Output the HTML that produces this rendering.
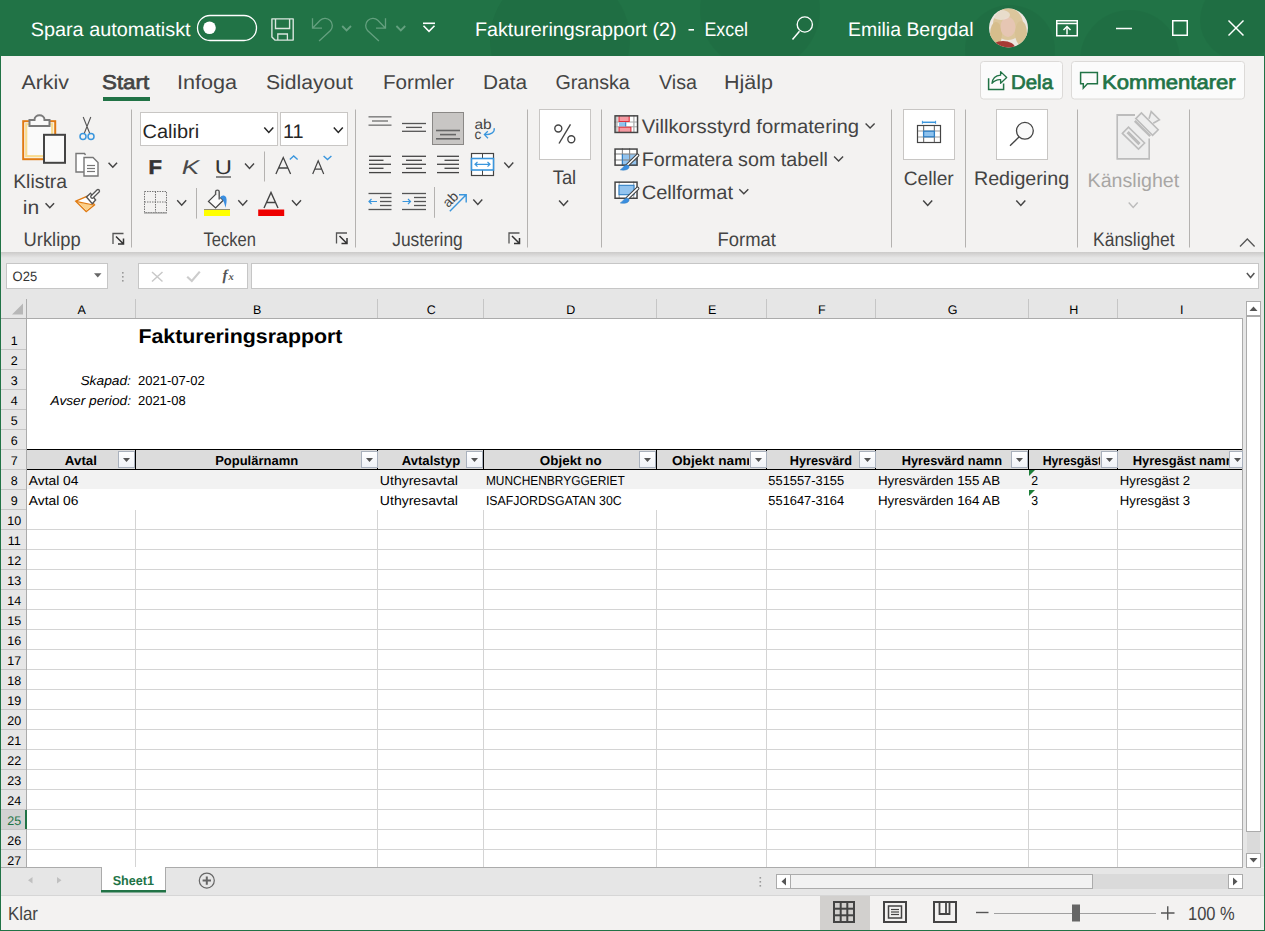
<!DOCTYPE html>
<html><head><meta charset="utf-8"><title>Excel</title>
<style>
html,body{margin:0;padding:0;width:1265px;height:931px;overflow:hidden;background:#f3f2f1;}
svg{display:block;font-family:'Liberation Sans', sans-serif;}
</style></head><body>
<svg width="1265" height="931" viewBox="0 0 1265 931" text-rendering="geometricPrecision">
<defs>
<radialGradient id="av" cx="50%" cy="45%" r="55%">
<stop offset="0" stop-color="#e9cdb8"/><stop offset="0.45" stop-color="#d8b98e"/><stop offset="0.8" stop-color="#c9a56e"/><stop offset="1" stop-color="#b08a5a"/>
</radialGradient>
<linearGradient id="shad" x1="0" y1="0" x2="0" y2="1"><stop offset="0" stop-color="#cbcac9"/><stop offset="1" stop-color="#e6e6e6"/></linearGradient>
<linearGradient id="fbtn" x1="0" y1="0" x2="0" y2="1"><stop offset="0" stop-color="#ffffff"/><stop offset="1" stop-color="#eef1f6"/></linearGradient>
<clipPath id="tb"><rect x="0" y="0" width="1265" height="56"/></clipPath>
<clipPath id="avc"><circle cx="1008.5" cy="28" r="19.5"/></clipPath>
<clipPath id="grid"><rect x="27" y="299" width="1216" height="568"/></clipPath>
</defs>
<rect x="0" y="0" width="1265" height="931" fill="#f3f2f1" />
<rect x="0" y="0" width="1265" height="56" fill="#217346" />
<g opacity="0.07" fill="#0b3d22" clip-path="url(#tb)"><circle cx="560" cy="40" r="70"/><circle cx="760" cy="10" r="60"/><circle cx="1010" cy="50" r="45"/><circle cx="1240" cy="20" r="40"/><circle cx="1130" cy="60" r="50"/></g>
<text x="30.72" y="36.00" font-size="19.5" fill="#ffffff" textLength="159.85" lengthAdjust="spacingAndGlyphs">Spara automatiskt</text>
<rect x="197.5" y="15.5" width="59" height="25" fill="none" stroke="#ffffff" stroke-width="1.3" rx="12.5" />
<circle cx="209.5" cy="27.8" r="6.3" fill="#fff"/>
<path d="M271.9,18.9 H293.2 V40.1 H274.9 L271.9,37.1 Z" stroke="#d9e6de" fill="none" stroke-width="1.4" stroke-linejoin="round"/>
<path d="M275.5,19 V28.5 H289.6 V19" stroke="#d9e6de" fill="none" stroke-width="1.4" />
<path d="M277.8,40 V34 H287.4 V40" stroke="#d9e6de" fill="none" stroke-width="1.3" />
<path d="M312.5,18.2 V28.2 H322 M312.5,28.2 L320.2,20.2 A7.3,7.3 0 0 1 330.5,30.5 L319.1,41" stroke="#64a07f" fill="none" stroke-width="1.3" />
<path d="M342.20000000000005,26.0 L346.6,30.4 L351.0,26.0" stroke="#64a07f" fill="none" stroke-width="1.8" />
<path d="M385.5,18.2 V28.2 H376 M385.5,28.2 L377.8,20.2 A7.3,7.3 0 0 0 367.5,30.5 L378.9,41" stroke="#64a07f" fill="none" stroke-width="1.3" />
<path d="M396.40000000000003,26.0 L400.8,30.4 L405.2,26.0" stroke="#64a07f" fill="none" stroke-width="1.8" />
<line x1="423" y1="23.3" x2="435" y2="23.3" stroke="#ffffff" stroke-width="1.6" />
<path d="M423.5,25.75 L429,31.25 L434.5,25.75" stroke="#ffffff" fill="none" stroke-width="1.6" />
<text x="475.02" y="35.80" font-size="19.5" fill="#ffffff" textLength="201.55" lengthAdjust="spacingAndGlyphs">Faktureringsrapport (2)</text>
<rect x="688.5" y="29" width="5.5" height="1.6" fill="#ffffff" />
<text x="704.52" y="35.80" font-size="19.5" fill="#ffffff" textLength="43.45" lengthAdjust="spacingAndGlyphs">Excel</text>
<circle cx="804.8" cy="24.5" r="7.6" fill="none" stroke="#fff" stroke-width="1.4"/>
<line x1="792.5" y1="39.5" x2="799.5" y2="31.3" stroke="#ffffff" stroke-width="1.5" />
<text x="848.02" y="36.00" font-size="19.5" fill="#ffffff" textLength="125.45" lengthAdjust="spacingAndGlyphs">Emilia Bergdal</text>
<g clip-path="url(#avc)"><rect x="988" y="8" width="42" height="42" fill="#ece6e0"/><ellipse cx="1008" cy="24" rx="15" ry="16" fill="#dcc69c"/><ellipse cx="996" cy="34" rx="6" ry="12" fill="#d6bd8c"/><ellipse cx="1021" cy="33" rx="6" ry="12" fill="#d8c194"/><ellipse cx="1008" cy="27" rx="7.5" ry="10" fill="#e6c6b3"/><ellipse cx="1003" cy="48" rx="12" ry="7" fill="#a63a35"/><ellipse cx="1001" cy="15" rx="9" ry="5" fill="#ece6df" opacity="0.7"/></g>
<rect x="1056.75" y="20.75" width="20.5" height="15" fill="none" stroke="#ffffff" stroke-width="1.5" />
<line x1="1057" y1="23.5" x2="1077" y2="23.5" stroke="#ffffff" stroke-width="1.5" />
<line x1="1067" y1="34.5" x2="1067" y2="27" stroke="#ffffff" stroke-width="1.5" />
<path d="M1063.5,30 L1067,26.5 L1070.5,30" stroke="#ffffff" fill="none" stroke-width="1.5" />
<line x1="1116" y1="28.5" x2="1132" y2="28.5" stroke="#ffffff" stroke-width="1.5" />
<rect x="1172.75" y="20.75" width="14.5" height="14.5" fill="none" stroke="#ffffff" stroke-width="1.5" />
<line x1="1228.5" y1="20.5" x2="1243.5" y2="35.5" stroke="#ffffff" stroke-width="1.5" />
<line x1="1243.5" y1="20.5" x2="1228.5" y2="35.5" stroke="#ffffff" stroke-width="1.5" />
<text x="21.50" y="89.00" font-size="20" fill="#444444" textLength="47.50" lengthAdjust="spacingAndGlyphs">Arkiv</text>
<text x="176.90" y="89.00" font-size="20" fill="#444444" textLength="60.10" lengthAdjust="spacingAndGlyphs">Infoga</text>
<text x="266.00" y="89.00" font-size="20" fill="#444444" textLength="87.00" lengthAdjust="spacingAndGlyphs">Sidlayout</text>
<text x="383.00" y="89.00" font-size="20" fill="#444444" textLength="71.00" lengthAdjust="spacingAndGlyphs">Formler</text>
<text x="483.00" y="89.00" font-size="20" fill="#444444" textLength="44.00" lengthAdjust="spacingAndGlyphs">Data</text>
<text x="555.40" y="89.00" font-size="20" fill="#444444" textLength="74.40" lengthAdjust="spacingAndGlyphs">Granska</text>
<text x="659.00" y="89.00" font-size="20" fill="#444444" textLength="38.00" lengthAdjust="spacingAndGlyphs">Visa</text>
<text x="724.00" y="89.00" font-size="20" fill="#444444" textLength="49.00" lengthAdjust="spacingAndGlyphs">Hjälp</text>
<text x="102.00" y="89.00" font-size="20" fill="#444444" stroke="#444444" stroke-width="0.7" textLength="47.20" lengthAdjust="spacingAndGlyphs">Start</text>
<rect x="103" y="97" width="47" height="4" fill="#217346" />
<rect x="980.5" y="61.5" width="82" height="37.5" fill="#fbfbfb" stroke="#dcdad8" stroke-width="1" rx="3" />
<rect x="1071.5" y="61.5" width="173" height="37.5" fill="#fbfbfb" stroke="#dcdad8" stroke-width="1" rx="3" />
<path d="M988.6,78.3 V89.4 H1003.6 V83.6" stroke="#217346" fill="none" stroke-width="1.5" />
<path d="M992,83.4 C992.5,78 996,75.6 1000.6,75.2 V71.6 L1006.7,77.5 L1000.6,83.2 V79.6 C997,79.4 994,81 992,83.4 Z" stroke="#217346" fill="none" stroke-width="1.3" stroke-linejoin="round"/>
<text x="1011.00" y="88.80" font-size="20" fill="#217346" stroke="#217346" stroke-width="0.7" textLength="42.00" lengthAdjust="spacingAndGlyphs">Dela</text>
<path d="M1080.6,72.6 H1097.4 V83.8 H1087.4 L1083.3,88.2 V83.8 H1080.6 Z" stroke="#217346" fill="none" stroke-width="1.5" />
<text x="1102.00" y="88.80" font-size="20" fill="#217346" stroke="#217346" stroke-width="0.7" textLength="133.70" lengthAdjust="spacingAndGlyphs">Kommentarer</text>
<line x1="131.5" y1="109.5" x2="131.5" y2="247.5" stroke="#b4b2b0" stroke-width="1" />
<line x1="355.5" y1="109.5" x2="355.5" y2="247.5" stroke="#b4b2b0" stroke-width="1" />
<line x1="527.5" y1="109.5" x2="527.5" y2="247.5" stroke="#b4b2b0" stroke-width="1" />
<line x1="601.5" y1="109.5" x2="601.5" y2="247.5" stroke="#b4b2b0" stroke-width="1" />
<line x1="891.5" y1="109.5" x2="891.5" y2="247.5" stroke="#b4b2b0" stroke-width="1" />
<line x1="965.5" y1="109.5" x2="965.5" y2="247.5" stroke="#b4b2b0" stroke-width="1" />
<line x1="1077.5" y1="109.5" x2="1077.5" y2="247.5" stroke="#b4b2b0" stroke-width="1" />
<line x1="1189.5" y1="109.5" x2="1189.5" y2="247.5" stroke="#b4b2b0" stroke-width="1" />
<rect x="0" y="252" width="1265" height="47" fill="#e6e6e6" />
<rect x="0" y="252" width="1265" height="6" fill="url(#shad)" />
<rect x="23.2" y="121.2" width="32" height="38" fill="#fafafa" stroke="#e07a12" stroke-width="2" />
<rect x="26.2" y="124.2" width="26" height="32" fill="none" stroke="#f9db8e" stroke-width="2.2" />
<path d="M29.5,126 V120 H34.5 C34.5,113.8 44.5,113.8 44.5,120 H49.5 V126 Z" stroke="#7a7a7a" fill="#fafafa" stroke-width="2" />
<rect x="44" y="134.8" width="21" height="28" fill="#fafafa" stroke="#444" stroke-width="2" />
<text x="13.22" y="187.50" font-size="19.5" fill="#444444" textLength="53.75" lengthAdjust="spacingAndGlyphs">Klistra</text>
<text x="22.82" y="213.70" font-size="19.5" fill="#444444" textLength="16.45" lengthAdjust="spacingAndGlyphs">in</text>
<path d="M45.55,203.25 L49.8,207.75 L54.05,203.25" stroke="#444444" fill="none" stroke-width="1.5" />
<path d="M83.2,117 L89.8,133.5 M90.8,117 L84.2,133.5" stroke="#555" fill="none" stroke-width="1.1" />
<circle cx="83" cy="136.5" r="3" fill="none" stroke="#3a96dd" stroke-width="1.5"/>
<circle cx="91" cy="136.5" r="3" fill="none" stroke="#3a96dd" stroke-width="1.5"/>
<path d="M84,172 H76 V153.5 H84.5 L85.5,155" stroke="#777" fill="#fff" stroke-width="1.4" />
<path d="M84,157.5 H93 L98,162.5 V176 H84 Z" stroke="#777" fill="#fff" stroke-width="1.4" />
<line x1="87" y1="165.5" x2="95" y2="165.5" stroke="#777" stroke-width="1.2" />
<line x1="87" y1="168.5" x2="95" y2="168.5" stroke="#777" stroke-width="1.2" />
<line x1="87" y1="171.5" x2="95" y2="171.5" stroke="#777" stroke-width="1.2" />
<path d="M108.55,162.75 L112.8,167.25 L117.05,162.75" stroke="#444444" fill="none" stroke-width="1.5" />
<path d="M75.8,201.2 L87.5,196.2 L94.5,204.8 L86.2,211.6 Z" stroke="#e07b12" fill="#ffffff" stroke-width="1.4" />
<path d="M77.5,202 L92.8,205.2 L86.4,210.4 Z" stroke="none" fill="#fbd08a" stroke-width="1" />
<path d="M77,201.6 L93.5,205" stroke="#e07b12" fill="none" stroke-width="1.2" />
<path d="M86.5,197 L90.5,193.2 L95.6,200 L92.3,203.6 Z" stroke="#555" fill="#ffffff" stroke-width="1.4" />
<path d="M92.2,196.8 L98,191" stroke="#555" fill="none" stroke-width="4.2" stroke-linecap="round"/>
<path d="M92.2,196.8 L98,191" stroke="#ffffff" fill="none" stroke-width="1.6" stroke-linecap="round"/>
<text x="23.52" y="245.60" font-size="19.5" fill="#444444" textLength="57.15" lengthAdjust="spacingAndGlyphs">Urklipp</text>
<path d="M113.0,244 V233.5 H123.5" stroke="#555" fill="none" stroke-width="1.3" />
<path d="M116.0,236.5 L123.5,244 M123.5,238.5 V244 H118.0" stroke="#333" fill="none" stroke-width="1.5" />
<rect x="140.5" y="112.5" width="137" height="33" fill="#ffffff" stroke="#c8c6c4" stroke-width="1" />
<rect x="280.5" y="112.5" width="67" height="33" fill="#ffffff" stroke="#c8c6c4" stroke-width="1" />
<text x="142.62" y="138.30" font-size="19.5" fill="#262626" textLength="56.55" lengthAdjust="spacingAndGlyphs">Calibri</text>
<path d="M264.3,127.5 L268.8,132.5 L273.3,127.5" stroke="#262626" fill="none" stroke-width="1.5" />
<text x="283.02" y="138.30" font-size="19.5" fill="#262626" textLength="20.65" lengthAdjust="spacingAndGlyphs">11</text>
<path d="M333.8,127.5 L338.3,132.5 L342.8,127.5" stroke="#262626" fill="none" stroke-width="1.5" />
<text x="148.60" y="174.00" font-size="20" fill="#333" font-weight="bold" stroke="#333" stroke-width="0.6" textLength="13.40" lengthAdjust="spacingAndGlyphs">F</text>
<text x="181.70" y="174.00" font-size="20" fill="#4a4a4a" font-style="italic" textLength="17.50" lengthAdjust="spacingAndGlyphs">K</text>
<text x="214.80" y="174.00" font-size="20" fill="#333" textLength="17.20" lengthAdjust="spacingAndGlyphs">U</text>
<line x1="216" y1="177" x2="231" y2="177" stroke="#888" stroke-width="2" />
<path d="M245.0,163.5 L249.5,168.5 L254.0,163.5" stroke="#444444" fill="none" stroke-width="1.4" />
<line x1="264.5" y1="151.5" x2="264.5" y2="181.5" stroke="#b4b2b0" stroke-width="1" />
<path d="M275.9,174 L283.25,157.6 L290.6,174 M278.6,168 H287.9" stroke="#444" fill="none" stroke-width="1.3" />
<path d="M289.8,159.5 L293.7,156 L297.6,159.5" stroke="#3a96dd" fill="none" stroke-width="1.4" />
<path d="M312.7,174 L318.2,160.8 L323.7,174 M314.7,169.2 H321.7" stroke="#444" fill="none" stroke-width="1.2" />
<path d="M323.6,156 L327.5,159.5 L331.4,156" stroke="#3a96dd" fill="none" stroke-width="1.4" />
<g stroke="#777" stroke-width="1" stroke-dasharray="1.5,1" fill="none"><rect x="144.5" y="191.5" width="22" height="21"/><line x1="155.5" y1="191.5" x2="155.5" y2="212.5"/><line x1="144.5" y1="202" x2="166.5" y2="202"/></g>
<line x1="144" y1="213" x2="167" y2="213" stroke="#999" stroke-width="1.2" />
<path d="M177.2,200.3 L181.7,205.3 L186.2,200.3" stroke="#444444" fill="none" stroke-width="1.4" />
<line x1="196.5" y1="188" x2="196.5" y2="218.6" stroke="#b4b2b0" stroke-width="1" />
<path d="M215.6,194.4 L208.5,201.4 L215.6,207.9 L223.3,200.2 L219.5,196.5 Z" stroke="none" fill="#fafafa" stroke-width="1" />
<path d="M215.6,194.4 L208.5,201.4 L215.6,207.9 L223.3,200.2 L220.3,197.4" stroke="#444" fill="none" stroke-width="1.3" />
<path d="M215.6,195 V191.8 C215.6,189.6 219.2,189.6 219.2,191.8 V199.5" stroke="#555" fill="none" stroke-width="1.4" />
<path d="M220.4,197.4 C221.2,195.2 224.6,194.6 226.2,197.6 C227.2,200.4 226.2,204.5 225.6,207.8 C224.6,204.2 223.8,200.8 222.2,199.2 Z" stroke="none" fill="#3a8ee0" stroke-width="1" />
<rect x="204" y="209" width="26" height="7" fill="#ffff00" />
<line x1="204" y1="209.5" x2="230" y2="209.5" stroke="#77708a" stroke-width="0.8" />
<path d="M238.3,200.3 L242.8,205.3 L247.3,200.3" stroke="#444444" fill="none" stroke-width="1.4" />
<path d="M264,208 L271,192.5 L278,208 M266.5,202.5 H275.5" stroke="#444" fill="none" stroke-width="1.4" />
<rect x="258.2" y="209.5" width="26" height="6.5" fill="#ee0000" />
<path d="M292.0,200.3 L296.5,205.3 L301.0,200.3" stroke="#444444" fill="none" stroke-width="1.4" />
<text x="203.53" y="246.00" font-size="19.5" fill="#444444" textLength="52.45" lengthAdjust="spacingAndGlyphs">Tecken</text>
<path d="M336.5,243.5 V233.0 H347" stroke="#555" fill="none" stroke-width="1.3" />
<path d="M339.5,236.0 L347,243.5 M347,238.0 V243.5 H341.5" stroke="#333" fill="none" stroke-width="1.5" />
<line x1="368.5" y1="116.8" x2="391.5" y2="116.8" stroke="#888" stroke-width="1.6" />
<line x1="372" y1="121" x2="388" y2="121" stroke="#888" stroke-width="1.6" />
<line x1="368.5" y1="125.2" x2="391.5" y2="125.2" stroke="#888" stroke-width="1.6" />
<line x1="402" y1="123.5" x2="426" y2="123.5" stroke="#555" stroke-width="1.3" />
<line x1="406" y1="127.4" x2="422" y2="127.4" stroke="#555" stroke-width="1.3" />
<line x1="402" y1="131.3" x2="426" y2="131.3" stroke="#555" stroke-width="1.3" />
<rect x="432.5" y="112.5" width="31" height="32" fill="#c8c6c4" stroke="#8a8886" stroke-width="1" />
<line x1="436" y1="130.5" x2="460" y2="130.5" stroke="#666" stroke-width="1.6" />
<line x1="440" y1="134.6" x2="456" y2="134.6" stroke="#666" stroke-width="1.6" />
<line x1="436" y1="138.8" x2="460" y2="138.8" stroke="#666" stroke-width="1.6" />
<text x="474.50" y="128.60" font-size="14" fill="#444" textLength="17.20" lengthAdjust="spacingAndGlyphs">ab</text>
<text x="474.50" y="139.00" font-size="14" fill="#444" textLength="6.80" lengthAdjust="spacingAndGlyphs">c</text>
<path d="M494.2,128.2 C495,132.5 490.5,135 484.6,134.6 M487.8,131.3 L484.4,134.6 L488,138.2" stroke="#3a96dd" fill="none" stroke-width="1.3" />
<line x1="369" y1="156.3" x2="391" y2="156.3" stroke="#444" stroke-width="1.3" />
<line x1="369" y1="160.3" x2="383.5" y2="160.3" stroke="#444" stroke-width="1.3" />
<line x1="369" y1="164.3" x2="391" y2="164.3" stroke="#444" stroke-width="1.3" />
<line x1="369" y1="168.3" x2="383.5" y2="168.3" stroke="#444" stroke-width="1.3" />
<line x1="369" y1="172.6" x2="391" y2="172.6" stroke="#444" stroke-width="1.3" />
<line x1="402" y1="156.3" x2="426" y2="156.3" stroke="#444" stroke-width="1.3" />
<line x1="406" y1="160.3" x2="422" y2="160.3" stroke="#444" stroke-width="1.3" />
<line x1="402" y1="164.3" x2="426" y2="164.3" stroke="#444" stroke-width="1.3" />
<line x1="406" y1="168.3" x2="422" y2="168.3" stroke="#444" stroke-width="1.3" />
<line x1="402" y1="172.6" x2="426" y2="172.6" stroke="#444" stroke-width="1.3" />
<line x1="437" y1="156.3" x2="459" y2="156.3" stroke="#444" stroke-width="1.3" />
<line x1="444.5" y1="160.3" x2="459" y2="160.3" stroke="#444" stroke-width="1.3" />
<line x1="437" y1="164.3" x2="459" y2="164.3" stroke="#444" stroke-width="1.3" />
<line x1="444.5" y1="168.3" x2="459" y2="168.3" stroke="#444" stroke-width="1.3" />
<line x1="437" y1="172.6" x2="459" y2="172.6" stroke="#444" stroke-width="1.3" />
<rect x="471.5" y="153.5" width="22" height="22" fill="#fff" stroke="#444" stroke-width="1.2" />
<line x1="482.5" y1="153.5" x2="482.5" y2="175.5" stroke="#444" stroke-width="1" />
<rect x="471.5" y="158.5" width="22" height="11.5" fill="#fff" stroke="#3a96dd" stroke-width="1.6" />
<path d="M475,164.3 H490 M477.5,162 L475,164.3 L477.5,166.6 M487.5,162 L490,164.3 L487.5,166.6" stroke="#3a96dd" fill="none" stroke-width="1.2" />
<path d="M504.3,162.5 L508.8,167.5 L513.3,162.5" stroke="#444444" fill="none" stroke-width="1.4" />
<line x1="368.5" y1="193.5" x2="391.5" y2="193.5" stroke="#555" stroke-width="1.3" />
<line x1="380" y1="197.5" x2="391.5" y2="197.5" stroke="#555" stroke-width="1.3" />
<line x1="380" y1="201.5" x2="391.5" y2="201.5" stroke="#555" stroke-width="1.3" />
<line x1="380" y1="205.5" x2="391.5" y2="205.5" stroke="#555" stroke-width="1.3" />
<line x1="368.5" y1="209.5" x2="391.5" y2="209.5" stroke="#555" stroke-width="1.3" />
<path d="M369,201.5 H377 M371.5,199 L369,201.5 L371.5,204" stroke="#3a96dd" fill="none" stroke-width="1.2" />
<line x1="402" y1="193.5" x2="426" y2="193.5" stroke="#555" stroke-width="1.3" />
<line x1="414" y1="197.5" x2="426" y2="197.5" stroke="#555" stroke-width="1.3" />
<line x1="414" y1="201.5" x2="426" y2="201.5" stroke="#555" stroke-width="1.3" />
<line x1="414" y1="205.5" x2="426" y2="205.5" stroke="#555" stroke-width="1.3" />
<line x1="402" y1="209.5" x2="426" y2="209.5" stroke="#555" stroke-width="1.3" />
<path d="M402.5,201.5 H410.5 M408,199 L410.5,201.5 L408,204" stroke="#3a96dd" fill="none" stroke-width="1.2" />
<line x1="434.5" y1="187" x2="434.5" y2="217.8" stroke="#b4b2b0" stroke-width="1" />
<text x="450.6" y="204.2" font-size="14" fill="#444" text-anchor="middle" transform="rotate(-45 450.6 199.6)">ab</text>
<path d="M449.8,211.3 L466.2,194.8 M459,194.8 H466.2 V202.4" stroke="#3a96dd" fill="none" stroke-width="1.4" />
<path d="M473.3,199.5 L477.8,204.5 L482.3,199.5" stroke="#444444" fill="none" stroke-width="1.4" />
<text x="392.22" y="246.00" font-size="19.5" fill="#444444" textLength="70.55" lengthAdjust="spacingAndGlyphs">Justering</text>
<path d="M509.0,243.5 V233.0 H519.5" stroke="#555" fill="none" stroke-width="1.3" />
<path d="M512.0,236.0 L519.5,243.5 M519.5,238.0 V243.5 H514.0" stroke="#333" fill="none" stroke-width="1.5" />
<rect x="539.5" y="109.5" width="51" height="50" fill="#ffffff" stroke="#c8c6c4" stroke-width="1" />
<circle cx="558.3" cy="128.5" r="3.5" fill="none" stroke="#444" stroke-width="1.4"/>
<circle cx="571.3" cy="139.3" r="3.5" fill="none" stroke="#444" stroke-width="1.4"/>
<line x1="559" y1="143.5" x2="570.5" y2="124.3" stroke="#444" stroke-width="1.4" />
<text x="552.73" y="184.40" font-size="19.5" fill="#444444" textLength="23.45" lengthAdjust="spacingAndGlyphs">Tal</text>
<path d="M559.1,200.5 L563.6,205.5 L568.1,200.5" stroke="#444444" fill="none" stroke-width="1.5" />
<rect x="614.3" y="115.1" width="23.5" height="17.6" fill="#fff" />
<line x1="616.9" y1="115.1" x2="616.9" y2="132.7" stroke="#a8a8a8" stroke-width="1.2" />
<line x1="633.9" y1="115.1" x2="633.9" y2="132.7" stroke="#a8a8a8" stroke-width="1.2" />
<line x1="614.3" y1="122.0" x2="637.8" y2="122.0" stroke="#a8a8a8" stroke-width="1" />
<line x1="614.3" y1="126.8" x2="637.8" y2="126.8" stroke="#a8a8a8" stroke-width="1" />
<rect x="619.0" y="115.69999999999999" width="10.2" height="5.8" fill="#f59aa2" />
<path d="M619.0,115.69999999999999 V121.5 H629.1999999999999 V115.69999999999999" stroke="#e0303c" fill="none" stroke-width="1.1" />
<rect x="619.0" y="122.3" width="6.7" height="4.2" fill="#8ec2ee" />
<path d="M625.6999999999999,122.3 V126.5" stroke="#2f7fc4" fill="none" stroke-width="1.1" />
<rect x="619.0" y="127.3" width="11.9" height="5.2" fill="#f59aa2" />
<path d="M619.0,132.29999999999998 V127.3 H630.9 V132.29999999999998" stroke="#e0303c" fill="none" stroke-width="1.1" />
<rect x="615.05" y="115.85" width="22.5" height="16.6" fill="none" stroke="#444" stroke-width="1.5" />
<text x="641.73" y="132.60" font-size="19.5" fill="#444444" textLength="217.25" lengthAdjust="spacingAndGlyphs">Villkorsstyrd formatering</text>
<path d="M865.6,123.45 L870.1,127.95 L874.6,123.45" stroke="#444444" fill="none" stroke-width="1.4" />
<rect x="614.3" y="148.3" width="23.5" height="17.6" fill="#fff" />
<rect x="622.4" y="154.0" width="15.4" height="11.9" fill="#93c4ef" />
<line x1="622.4" y1="148.3" x2="622.4" y2="165.9" stroke="#888" stroke-width="1.1" />
<line x1="629.5999999999999" y1="148.3" x2="629.5999999999999" y2="165.9" stroke="#888" stroke-width="1.1" />
<line x1="614.3" y1="154.0" x2="637.8" y2="154.0" stroke="#888" stroke-width="1.1" />
<line x1="614.3" y1="160.0" x2="637.8" y2="160.0" stroke="#888" stroke-width="1.1" />
<line x1="622.4" y1="154.0" x2="622.4" y2="165.9" stroke="#2f7fc4" stroke-width="1.1" />
<rect x="615.05" y="149.05" width="22" height="16.1" fill="none" stroke="#444" stroke-width="1.5" />
<path d="M637.5999999999999,155.3 L627.3,165.3" stroke="#444" fill="none" stroke-width="3.6" stroke-linecap="round"/>
<path d="M637.5999999999999,155.3 L627.3,165.3" stroke="#fff" fill="none" stroke-width="1.5" stroke-linecap="round"/>
<path d="M620.3,169.8 C622.3,169.3 623.3,165.8 626.3,165.10000000000002 C628.8,164.8 629.8,167.10000000000002 628.3,168.60000000000002 C626.8,170.10000000000002 623.3,170.5 620.3,169.8 Z" stroke="#2f7fc4" fill="#3a8ee0" stroke-width="0.6" />
<text x="641.73" y="165.70" font-size="19.5" fill="#444444" textLength="186.25" lengthAdjust="spacingAndGlyphs">Formatera som tabell</text>
<path d="M834.1,156.55 L838.6,161.05 L843.1,156.55" stroke="#444444" fill="none" stroke-width="1.4" />
<rect x="614.3" y="181.4" width="23.5" height="17.6" fill="#fff" />
<line x1="619.1999999999999" y1="181.4" x2="619.1999999999999" y2="199.0" stroke="#a8a8a8" stroke-width="1.1" />
<line x1="633.6999999999999" y1="181.4" x2="633.6999999999999" y2="199.0" stroke="#a8a8a8" stroke-width="1.1" />
<rect x="619.0" y="185.3" width="15" height="9.4" fill="#93c4ef" stroke="#2f7fc4" stroke-width="1.1" />
<rect x="615.05" y="182.15" width="22" height="16.1" fill="none" stroke="#444" stroke-width="1.5" />
<path d="M637.5999999999999,188.4 L627.3,198.4" stroke="#444" fill="none" stroke-width="3.6" stroke-linecap="round"/>
<path d="M637.5999999999999,188.4 L627.3,198.4" stroke="#fff" fill="none" stroke-width="1.5" stroke-linecap="round"/>
<path d="M620.3,202.9 C622.3,202.4 623.3,198.9 626.3,198.20000000000002 C628.8,197.9 629.8,200.20000000000002 628.3,201.70000000000002 C626.8,203.20000000000002 623.3,203.6 620.3,202.9 Z" stroke="#2f7fc4" fill="#3a8ee0" stroke-width="0.6" />
<text x="641.73" y="198.60" font-size="19.5" fill="#444444" textLength="91.25" lengthAdjust="spacingAndGlyphs">Cellformat</text>
<path d="M739.3,189.25 L743.8,193.75 L748.3,189.25" stroke="#444444" fill="none" stroke-width="1.4" />
<text x="717.62" y="245.90" font-size="19.5" fill="#444444" textLength="58.35" lengthAdjust="spacingAndGlyphs">Format</text>
<rect x="903.5" y="109.5" width="51" height="50" fill="#ffffff" stroke="#c8c6c4" stroke-width="1" />
<rect x="917.5" y="125.5" width="23" height="17" fill="#fff" stroke="#444" stroke-width="1.2" />
<line x1="923.6" y1="126" x2="923.6" y2="142" stroke="#777" stroke-width="1.2" />
<line x1="934.4" y1="126" x2="934.4" y2="142" stroke="#777" stroke-width="1.2" />
<line x1="918" y1="131" x2="940" y2="131" stroke="#999" stroke-width="1" />
<line x1="918" y1="137" x2="940" y2="137" stroke="#999" stroke-width="1" />
<rect x="923.6" y="131.2" width="10.8" height="5.6" fill="#8ec2ee" stroke="#2f7fc4" stroke-width="1.3" />
<line x1="922.3" y1="122.3" x2="935.7" y2="122.3" stroke="#3a96dd" stroke-width="1.5" />
<line x1="922.4" y1="120.8" x2="922.4" y2="123.8" stroke="#3a96dd" stroke-width="1" />
<line x1="935.6" y1="120.8" x2="935.6" y2="123.8" stroke="#3a96dd" stroke-width="1" />
<text x="903.73" y="184.80" font-size="19.5" fill="#444444" textLength="49.95" lengthAdjust="spacingAndGlyphs">Celler</text>
<path d="M923.2,200.5 L927.7,205.5 L932.2,200.5" stroke="#444444" fill="none" stroke-width="1.5" />
<rect x="996.5" y="109.5" width="51" height="50" fill="#ffffff" stroke="#c8c6c4" stroke-width="1" />
<circle cx="1024.9" cy="130.8" r="8.4" fill="#fafafa" stroke="#444" stroke-width="1.3"/>
<line x1="1010" y1="145.8" x2="1019" y2="137" stroke="#444" stroke-width="1.3" />
<text x="973.92" y="184.80" font-size="19.5" fill="#444444" textLength="95.25" lengthAdjust="spacingAndGlyphs">Redigering</text>
<path d="M1016.3,200.5 L1020.8,205.5 L1025.3,200.5" stroke="#444444" fill="none" stroke-width="1.5" />
<path d="M1135,115 H1117.3 V158.8 H1149.1 V138.5" stroke="#bcbcbc" fill="none" stroke-width="1.8" />
<path d="M1118.2,116 H1134 L1148.2,138.5 V157.9 H1118.2 Z" stroke="none" fill="#eeeeee" stroke-width="1" />
<path d="M1122.4,133.4 L1128.5,127.2 L1144.6,143 L1138.5,149.1 Z" stroke="#bcbcbc" fill="#eeeeee" stroke-width="1.6" />
<path d="M1127.5,133.3 L1128.7,132.1 L1139.6,143 L1138.4,144.2 Z" stroke="#bcbcbc" fill="#bcbcbc" stroke-width="1.4" />
<path d="M1135.8,118.6 L1141.4,113 L1158.2,129.8 L1152.6,135.4 Z" stroke="#bcbcbc" fill="#eeeeee" stroke-width="1.6" />
<path d="M1134.8,120.8 L1150.2,136.2" stroke="#bcbcbc" fill="none" stroke-width="2.4" />
<path d="M1149,118.8 L1151.2,111.6 L1159.4,119.8 L1153.2,123.2" stroke="#bcbcbc" fill="#eeeeee" stroke-width="1.6" />
<text x="1087.62" y="187.00" font-size="19.5" fill="#a8a6a4" textLength="91.55" lengthAdjust="spacingAndGlyphs">Känslighet</text>
<path d="M1128.7,202.5 L1133.2,207.5 L1137.7,202.5" stroke="#bbb" fill="none" stroke-width="1.4" />
<text x="1093.03" y="245.90" font-size="19.5" fill="#444444" textLength="81.65" lengthAdjust="spacingAndGlyphs">Känslighet</text>
<path d="M1240,246.5 L1247.3,239 L1254.6,246.5" stroke="#555" fill="none" stroke-width="1.3" />
<rect x="6.5" y="263.5" width="101" height="25" fill="#ffffff" stroke="#c6c6c6" stroke-width="1" />
<text x="12.62" y="281.00" font-size="13.5" fill="#333" textLength="24.55" lengthAdjust="spacingAndGlyphs">O25</text>
<path d="M94,273.3 H101.5 L97.75,277.5 Z" stroke="none" fill="#666" stroke-width="1" />
<rect x="122" y="272" width="1.6" height="1.6" fill="#999" />
<rect x="122" y="276" width="1.6" height="1.6" fill="#999" />
<rect x="122" y="280" width="1.6" height="1.6" fill="#999" />
<rect x="138.5" y="263.5" width="109" height="25" fill="#ffffff" stroke="#c6c6c6" stroke-width="1" />
<path d="M152,272 L162.5,281.5 M162.5,272 L152,281.5" stroke="#c8c8c8" fill="none" stroke-width="1.5" />
<path d="M187.2,276.8 L191.8,281 L199.8,271.6" stroke="#cccccc" fill="none" stroke-width="2.2" />
<text x="222.6" y="279.6" font-size="15" font-weight="bold" font-style="italic" font-family="Liberation Serif" fill="#555">f</text>
<text x="228.4" y="279.6" font-size="10.5" font-weight="bold" font-style="italic" font-family="Liberation Serif" fill="#555">x</text>
<rect x="251.5" y="263.5" width="1007" height="25" fill="#ffffff" stroke="#c6c6c6" stroke-width="1" />
<path d="M1246.85,273.05 L1250.6,277.55 L1254.35,273.05" stroke="#555" fill="none" stroke-width="1.5" />
<rect x="1" y="299" width="1242" height="20" fill="#e6e6e6" />
<rect x="1" y="299" width="26" height="568" fill="#e6e6e6" />
<rect x="27" y="319" width="1216" height="548" fill="#ffffff" />
<path d="M27,529.5 H1242 M27,549.5 H1242 M27,569.5 H1242 M27,589.5 H1242 M27,609.5 H1242 M27,629.5 H1242 M27,649.5 H1242 M27,669.5 H1242 M27,689.5 H1242 M27,709.5 H1242 M27,729.5 H1242 M27,749.5 H1242 M27,769.5 H1242 M27,789.5 H1242 M27,809.5 H1242 M27,829.5 H1242 M27,849.5 H1242 M27,869.5 H1242 M135.5,510 V867 M377.5,510 V867 M483.5,510 V867 M656.5,510 V867 M766.5,510 V867 M875.5,510 V867 M1028.5,510 V867 M1117.5,510 V867" stroke="#d4d4d4" fill="none" stroke-width="1" />
<path d="M1,349.5 H26 M1,369.5 H26 M1,389.5 H26 M1,409.5 H26 M1,429.5 H26 M1,449.5 H26 M1,469.5 H26 M1,489.5 H26 M1,509.5 H26 M1,529.5 H26 M1,549.5 H26 M1,569.5 H26 M1,589.5 H26 M1,609.5 H26 M1,629.5 H26 M1,649.5 H26 M1,669.5 H26 M1,689.5 H26 M1,709.5 H26 M1,729.5 H26 M1,749.5 H26 M1,769.5 H26 M1,789.5 H26 M1,809.5 H26 M1,829.5 H26 M1,849.5 H26 M1,869.5 H26" stroke="#c6c6c6" fill="none" stroke-width="1" />
<path d="M135.5,299 V318 M377.5,299 V318 M483.5,299 V318 M656.5,299 V318 M766.5,299 V318 M875.5,299 V318 M1028.5,299 V318 M1117.5,299 V318" stroke="#c6c6c6" fill="none" stroke-width="1" />
<line x1="1" y1="318.5" x2="1243" y2="318.5" stroke="#ababab" stroke-width="1" />
<line x1="26.5" y1="299" x2="26.5" y2="867" stroke="#ababab" stroke-width="1" />
<line x1="1242.5" y1="318" x2="1242.5" y2="867" stroke="#ababab" stroke-width="1" />
<path d="M12,314.5 L23,314.5 L23,303.5 Z" stroke="none" fill="#b7b7b7" stroke-width="1" />
<text x="81.7" y="314.2" font-size="12.5" fill="#000" text-anchor="middle">A</text>
<text x="257.2" y="314.2" font-size="12.5" fill="#000" text-anchor="middle">B</text>
<text x="431.2" y="314.2" font-size="12.5" fill="#000" text-anchor="middle">C</text>
<text x="570.7" y="314.2" font-size="12.5" fill="#000" text-anchor="middle">D</text>
<text x="712.2" y="314.2" font-size="12.5" fill="#000" text-anchor="middle">E</text>
<text x="821.7" y="314.2" font-size="12.5" fill="#000" text-anchor="middle">F</text>
<text x="952.7" y="314.2" font-size="12.5" fill="#000" text-anchor="middle">G</text>
<text x="1073.7" y="314.2" font-size="12.5" fill="#000" text-anchor="middle">H</text>
<text x="1181.7" y="314.2" font-size="12.5" fill="#000" text-anchor="middle">I</text>
<text x="14.3" y="344.8" font-size="12.5" fill="#000" text-anchor="middle">1</text>
<text x="14.3" y="364.8" font-size="12.5" fill="#000" text-anchor="middle">2</text>
<text x="14.3" y="384.8" font-size="12.5" fill="#000" text-anchor="middle">3</text>
<text x="14.3" y="404.8" font-size="12.5" fill="#000" text-anchor="middle">4</text>
<text x="14.3" y="424.8" font-size="12.5" fill="#000" text-anchor="middle">5</text>
<text x="14.3" y="444.8" font-size="12.5" fill="#000" text-anchor="middle">6</text>
<text x="14.3" y="464.8" font-size="12.5" fill="#000" text-anchor="middle">7</text>
<text x="14.3" y="484.8" font-size="12.5" fill="#000" text-anchor="middle">8</text>
<text x="14.3" y="504.8" font-size="12.5" fill="#000" text-anchor="middle">9</text>
<text x="14.3" y="524.8" font-size="12.5" fill="#000" text-anchor="middle">10</text>
<text x="14.3" y="544.8" font-size="12.5" fill="#000" text-anchor="middle">11</text>
<text x="14.3" y="564.8" font-size="12.5" fill="#000" text-anchor="middle">12</text>
<text x="14.3" y="584.8" font-size="12.5" fill="#000" text-anchor="middle">13</text>
<text x="14.3" y="604.8" font-size="12.5" fill="#000" text-anchor="middle">14</text>
<text x="14.3" y="624.8" font-size="12.5" fill="#000" text-anchor="middle">15</text>
<text x="14.3" y="644.8" font-size="12.5" fill="#000" text-anchor="middle">16</text>
<text x="14.3" y="664.8" font-size="12.5" fill="#000" text-anchor="middle">17</text>
<text x="14.3" y="684.8" font-size="12.5" fill="#000" text-anchor="middle">18</text>
<text x="14.3" y="704.8" font-size="12.5" fill="#000" text-anchor="middle">19</text>
<text x="14.3" y="724.8" font-size="12.5" fill="#000" text-anchor="middle">20</text>
<text x="14.3" y="744.8" font-size="12.5" fill="#000" text-anchor="middle">21</text>
<text x="14.3" y="764.8" font-size="12.5" fill="#000" text-anchor="middle">22</text>
<text x="14.3" y="784.8" font-size="12.5" fill="#000" text-anchor="middle">23</text>
<text x="14.3" y="804.8" font-size="12.5" fill="#000" text-anchor="middle">24</text>
<rect x="1" y="810" width="25" height="19" fill="#d2d2d2" />
<text x="14.3" y="824.8" font-size="12.5" fill="#217346" text-anchor="middle">25</text>
<text x="14.3" y="844.8" font-size="12.5" fill="#000" text-anchor="middle">26</text>
<text x="14.3" y="864.8" font-size="12.5" fill="#000" text-anchor="middle">27</text>
<rect x="25" y="810" width="2" height="19" fill="#217346" />
<rect x="27" y="449" width="1215" height="21" fill="#dcdcdc" />
<rect x="27" y="470" width="1215" height="19" fill="#f2f2f2" />
<line x1="27" y1="449.5" x2="1242" y2="449.5" stroke="#000" stroke-width="1" />
<line x1="27" y1="469.5" x2="1242" y2="469.5" stroke="#000" stroke-width="1" />
<line x1="135.5" y1="449" x2="135.5" y2="470" stroke="#000" stroke-width="1" />
<line x1="377.5" y1="449" x2="377.5" y2="470" stroke="#000" stroke-width="1" />
<line x1="483.5" y1="449" x2="483.5" y2="470" stroke="#000" stroke-width="1" />
<line x1="656.5" y1="449" x2="656.5" y2="470" stroke="#000" stroke-width="1" />
<line x1="766.5" y1="449" x2="766.5" y2="470" stroke="#000" stroke-width="1" />
<line x1="875.5" y1="449" x2="875.5" y2="470" stroke="#000" stroke-width="1" />
<line x1="1028.5" y1="449" x2="1028.5" y2="470" stroke="#000" stroke-width="1" />
<line x1="1117.5" y1="449" x2="1117.5" y2="470" stroke="#000" stroke-width="1" />
<rect x="118.5" y="451.5" width="16" height="16" fill="url(#fbtn)" stroke="#a9b1bd" stroke-width="1" />
<path d="M123,458 H130 L126.5,462 Z" stroke="none" fill="#555" stroke-width="1" />
<rect x="361.5" y="451.5" width="16" height="16" fill="url(#fbtn)" stroke="#a9b1bd" stroke-width="1" />
<path d="M366,458 H373 L369.5,462 Z" stroke="none" fill="#555" stroke-width="1" />
<rect x="466.5" y="451.5" width="16" height="16" fill="url(#fbtn)" stroke="#a9b1bd" stroke-width="1" />
<path d="M471,458 H478 L474.5,462 Z" stroke="none" fill="#555" stroke-width="1" />
<rect x="639.5" y="451.5" width="16" height="16" fill="url(#fbtn)" stroke="#a9b1bd" stroke-width="1" />
<path d="M644,458 H651 L647.5,462 Z" stroke="none" fill="#555" stroke-width="1" />
<rect x="750.5" y="451.5" width="16" height="16" fill="url(#fbtn)" stroke="#a9b1bd" stroke-width="1" />
<path d="M755,458 H762 L758.5,462 Z" stroke="none" fill="#555" stroke-width="1" />
<rect x="859.5" y="451.5" width="16" height="16" fill="url(#fbtn)" stroke="#a9b1bd" stroke-width="1" />
<path d="M864,458 H871 L867.5,462 Z" stroke="none" fill="#555" stroke-width="1" />
<rect x="1011.5" y="451.5" width="16" height="16" fill="url(#fbtn)" stroke="#a9b1bd" stroke-width="1" />
<path d="M1016,458 H1023 L1019.5,462 Z" stroke="none" fill="#555" stroke-width="1" />
<rect x="1101.5" y="451.5" width="16" height="16" fill="url(#fbtn)" stroke="#a9b1bd" stroke-width="1" />
<path d="M1106,458 H1113 L1109.5,462 Z" stroke="none" fill="#555" stroke-width="1" />
<rect x="1229.5" y="451.5" width="13" height="16" fill="url(#fbtn)" stroke="#a9b1bd" stroke-width="1" />
<path d="M1234,458 H1241 L1237.5,462 Z" stroke="none" fill="#555" stroke-width="1" />
<text x="64.85" y="465.00" font-size="13" fill="#000" font-weight="bold" textLength="32.10" lengthAdjust="spacingAndGlyphs">Avtal</text>
<text x="215.15" y="465.00" font-size="13" fill="#000" font-weight="bold" textLength="83.00" lengthAdjust="spacingAndGlyphs">Populärnamn</text>
<text x="401.75" y="465.00" font-size="13" fill="#000" font-weight="bold" textLength="58.50" lengthAdjust="spacingAndGlyphs">Avtalstyp</text>
<text x="539.85" y="465.00" font-size="13" fill="#000" font-weight="bold" textLength="61.80" lengthAdjust="spacingAndGlyphs">Objekt no</text>
<text x="789.75" y="465.00" font-size="13" fill="#000" font-weight="bold" textLength="62.20" lengthAdjust="spacingAndGlyphs">Hyresvärd</text>
<text x="901.65" y="465.00" font-size="13" fill="#000" font-weight="bold" textLength="100.40" lengthAdjust="spacingAndGlyphs">Hyresvärd namn</text>
<clipPath id="ce"><rect x="657" y="450" width="92" height="19"/></clipPath>
<clipPath id="ch"><rect x="1029" y="450" width="71" height="19"/></clipPath>
<clipPath id="ci"><rect x="1118" y="450" width="111" height="19"/></clipPath>
<g clip-path="url(#ce)">
<text x="671.95" y="465.00" font-size="13" fill="#000" font-weight="bold" textLength="82.70" lengthAdjust="spacingAndGlyphs">Objekt namn</text>
</g>
<g clip-path="url(#ch)">
<text x="1042.65" y="465.00" font-size="13" fill="#000" font-weight="bold" textLength="59.50" lengthAdjust="spacingAndGlyphs">Hyresgäst</text>
</g>
<g clip-path="url(#ci)">
<text x="1132.75" y="465.00" font-size="13" fill="#000" font-weight="bold" textLength="100.90" lengthAdjust="spacingAndGlyphs">Hyresgäst namn</text>
</g>
<text x="28.75" y="485.00" font-size="13" fill="#000" textLength="49.70" lengthAdjust="spacingAndGlyphs">Avtal 04</text>
<text x="379.85" y="485.00" font-size="13" fill="#000" textLength="78.00" lengthAdjust="spacingAndGlyphs">Uthyresavtal</text>
<text x="485.95" y="485.00" font-size="13" fill="#000" textLength="138.90" lengthAdjust="spacingAndGlyphs">MUNCHENBRYGGERIET</text>
<text x="768.35" y="485.00" font-size="13" fill="#000" textLength="75.80" lengthAdjust="spacingAndGlyphs">551557-3155</text>
<text x="877.95" y="485.00" font-size="13" fill="#000" textLength="122.20" lengthAdjust="spacingAndGlyphs">Hyresvärden 155 AB</text>
<text x="1031.35" y="485.00" font-size="13" fill="#000" textLength="6.80" lengthAdjust="spacingAndGlyphs">2</text>
<text x="1119.85" y="485.00" font-size="13" fill="#000" textLength="70.20" lengthAdjust="spacingAndGlyphs">Hyresgäst 2</text>
<text x="28.75" y="505.00" font-size="13" fill="#000" textLength="49.70" lengthAdjust="spacingAndGlyphs">Avtal 06</text>
<text x="379.85" y="505.00" font-size="13" fill="#000" textLength="78.00" lengthAdjust="spacingAndGlyphs">Uthyresavtal</text>
<text x="485.95" y="505.00" font-size="13" fill="#000" textLength="135.80" lengthAdjust="spacingAndGlyphs">ISAFJORDSGATAN 30C</text>
<text x="768.35" y="505.00" font-size="13" fill="#000" textLength="75.80" lengthAdjust="spacingAndGlyphs">551647-3164</text>
<text x="877.95" y="505.00" font-size="13" fill="#000" textLength="122.20" lengthAdjust="spacingAndGlyphs">Hyresvärden 164 AB</text>
<text x="1031.35" y="505.00" font-size="13" fill="#000" textLength="6.80" lengthAdjust="spacingAndGlyphs">3</text>
<text x="1119.85" y="505.00" font-size="13" fill="#000" textLength="70.20" lengthAdjust="spacingAndGlyphs">Hyresgäst 3</text>
<path d="M1029,470 H1035 L1029,476 Z" stroke="none" fill="#1e7f3a" stroke-width="1" />
<path d="M1029,490 H1035 L1029,496 Z" stroke="none" fill="#1e7f3a" stroke-width="1" />
<text x="138.40" y="342.80" font-size="20" fill="#000" font-weight="bold" textLength="204.10" lengthAdjust="spacingAndGlyphs">Faktureringsrapport</text>
<text x="80.45" y="385.00" font-size="13" fill="#000" font-style="italic" textLength="50.50" lengthAdjust="spacingAndGlyphs">Skapad:</text>
<text x="137.95" y="385.00" font-size="13" fill="#000" textLength="66.70" lengthAdjust="spacingAndGlyphs">2021-07-02</text>
<text x="50.55" y="405.00" font-size="13" fill="#000" font-style="italic" textLength="80.40" lengthAdjust="spacingAndGlyphs">Avser period:</text>
<text x="137.95" y="405.00" font-size="13" fill="#000" textLength="47.70" lengthAdjust="spacingAndGlyphs">2021-08</text>
<rect x="1243" y="299" width="21" height="568" fill="#e6e6e6" />
<rect x="1246.5" y="301.5" width="14" height="14" fill="#ffffff" stroke="#ababab" stroke-width="1" />
<path d="M1249.5,311 H1257.5 L1253.5,306.5 Z" stroke="none" fill="#555" stroke-width="1" />
<rect x="1246.5" y="316.5" width="14" height="515" fill="#ffffff" stroke="#ababab" stroke-width="1" />
<rect x="1247" y="832" width="13" height="21" fill="#dadada" />
<rect x="1246.5" y="853.5" width="14" height="14" fill="#ffffff" stroke="#ababab" stroke-width="1" />
<path d="M1249.5,858 H1257.5 L1253.5,862.5 Z" stroke="none" fill="#555" stroke-width="1" />
<rect x="1" y="868" width="1263" height="28" fill="#e6e6e6" />
<line x1="1" y1="867.5" x2="101" y2="867.5" stroke="#ababab" stroke-width="1" />
<line x1="166" y1="867.5" x2="1243" y2="867.5" stroke="#ababab" stroke-width="1" />
<line x1="1" y1="895.5" x2="1264" y2="895.5" stroke="#d6d6d6" stroke-width="1" />
<path d="M32.5,877 V883.5 L28,880.25 Z" stroke="none" fill="#c0c0c0" stroke-width="1" />
<path d="M57,877 V883.5 L61.5,880.25 Z" stroke="none" fill="#c0c0c0" stroke-width="1" />
<rect x="101.5" y="867" width="64" height="24" fill="#ffffff" />
<line x1="101.5" y1="867" x2="101.5" y2="892" stroke="#ababab" stroke-width="1" />
<line x1="165.5" y1="867" x2="165.5" y2="892" stroke="#ababab" stroke-width="1" />
<rect x="101" y="890" width="65" height="2.5" fill="#217346" />
<text x="112.65" y="884.80" font-size="13" fill="#217346" font-weight="bold" textLength="41.30" lengthAdjust="spacingAndGlyphs">Sheet1</text>
<circle cx="206.8" cy="880.6" r="7.5" fill="none" stroke="#666" stroke-width="1.2"/>
<path d="M202.6,880.6 H211 M206.8,876.4 V884.8" stroke="#666" fill="none" stroke-width="2" />
<rect x="759.5" y="877" width="1.6" height="1.6" fill="#9a9a9a" />
<rect x="759.5" y="881" width="1.6" height="1.6" fill="#9a9a9a" />
<rect x="759.5" y="885" width="1.6" height="1.6" fill="#9a9a9a" />
<rect x="776.5" y="874.5" width="14" height="14" fill="#ffffff" stroke="#ababab" stroke-width="1" />
<path d="M786,877.5 V885.5 L781.5,881.5 Z" stroke="none" fill="#555" stroke-width="1" />
<rect x="776" y="874" width="467" height="15" fill="#dadada" />
<rect x="776.5" y="874.5" width="14" height="14" fill="#ffffff" stroke="#ababab" stroke-width="1" />
<path d="M786,877.5 V885.5 L781.5,881.5 Z" stroke="none" fill="#555" stroke-width="1" />
<rect x="790.5" y="874.5" width="302" height="14" fill="#f2f2f2" stroke="#ababab" stroke-width="1" />
<rect x="1228.5" y="874.5" width="14" height="14" fill="#ffffff" stroke="#ababab" stroke-width="1" />
<path d="M1233,877.5 V885.5 L1237.5,881.5 Z" stroke="none" fill="#555" stroke-width="1" />
<text x="7.95" y="919.50" font-size="19" fill="#444444" textLength="30.00" lengthAdjust="spacingAndGlyphs">Klar</text>
<rect x="820" y="896" width="50" height="34" fill="#d2d0ce" />
<rect x="834" y="902" width="20" height="20" fill="#d2d0ce" stroke="#444" stroke-width="2" />
<line x1="840.7" y1="902" x2="840.7" y2="922" stroke="#444" stroke-width="2" />
<line x1="847.3" y1="902" x2="847.3" y2="922" stroke="#444" stroke-width="2" />
<line x1="834" y1="908.7" x2="854" y2="908.7" stroke="#444" stroke-width="2" />
<line x1="834" y1="915.3" x2="854" y2="915.3" stroke="#444" stroke-width="2" />
<rect x="884" y="902" width="22" height="20" fill="none" stroke="#444" stroke-width="2" />
<rect x="888.5" y="906" width="13" height="12" fill="none" stroke="#444" stroke-width="1.5" />
<line x1="891" y1="909.5" x2="899" y2="909.5" stroke="#444" stroke-width="1.2" />
<line x1="891" y1="912" x2="899" y2="912" stroke="#444" stroke-width="1.2" />
<line x1="891" y1="914.5" x2="899" y2="914.5" stroke="#444" stroke-width="1.2" />
<rect x="934" y="902" width="22" height="20" fill="none" stroke="#444" stroke-width="2" />
<path d="M939.5,902 V914 H946 V902 M946,914 V902" stroke="#444" fill="none" stroke-width="1.8" />
<path d="M939.5,914 H949.5 V902" stroke="#444" fill="none" stroke-width="1.8" />
<line x1="976" y1="912.5" x2="988.5" y2="912.5" stroke="#555" stroke-width="1.4" />
<line x1="994" y1="913.5" x2="1156" y2="913.5" stroke="#a0a0a0" stroke-width="1" />
<rect x="1072" y="904.5" width="8" height="17" fill="#666" />
<path d="M1161,913 H1174.5 M1167.75,906.25 V919.75" stroke="#555" fill="none" stroke-width="1.4" />
<text x="1188.05" y="919.70" font-size="19" fill="#444444" textLength="46.70" lengthAdjust="spacingAndGlyphs">100 %</text>
<rect x="0" y="56" width="1" height="875" fill="#217346" />
<rect x="1264" y="56" width="1" height="875" fill="#217346" />
<rect x="0" y="930" width="1265" height="1" fill="#217346" />
</svg>
</body></html>
